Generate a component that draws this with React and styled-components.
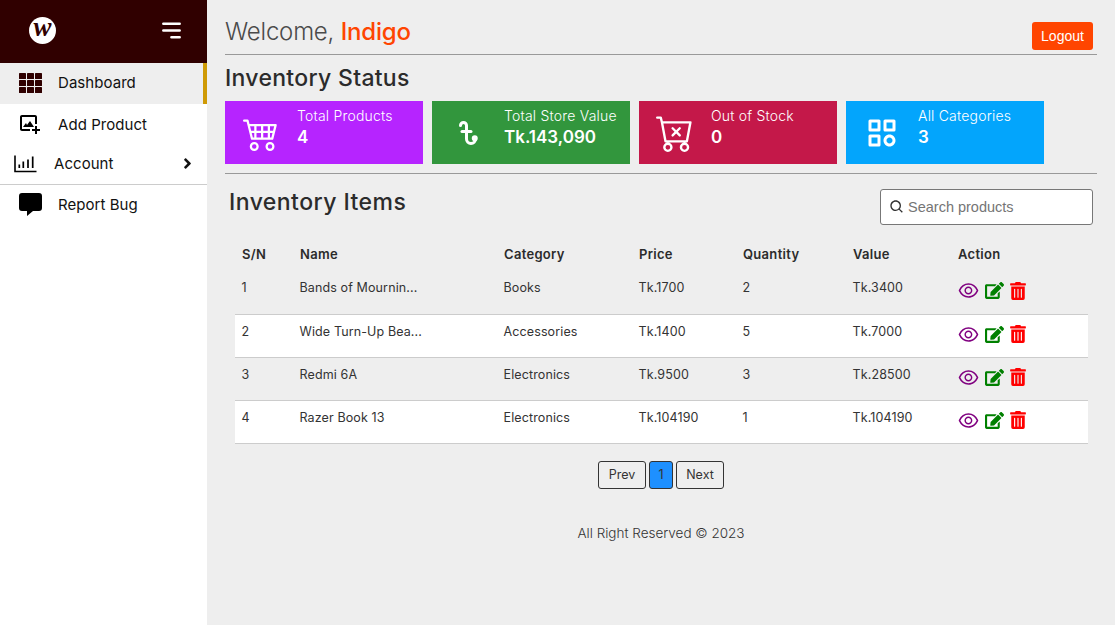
import React from "react";
import styled, { createGlobalStyle } from "styled-components";
import { AiOutlineEye } from "react-icons/ai";
import { BiCategory, BiImageAdd, BiSearch } from "react-icons/bi";
import { BsCart4, BsCartX } from "react-icons/bs";
import { FaEdit, FaTrashAlt, FaAngleRight } from "react-icons/fa";
import { HiMenuAlt3 } from "react-icons/hi";
import { TbCurrencyTaka } from "react-icons/tb";

const FONT = `Inter, "Liberation Sans", sans-serif`;

const GlobalStyle = createGlobalStyle`
  html, body {
    margin: 0;
    padding: 0;
    background: #eeeeee;
    font-family: ${FONT};
  }
  * {
    box-sizing: border-box;
  }
`;

const Layout = styled.div`
  display: flex;
  width: 1115px;
  height: 625px;
  overflow: hidden;
`;

const Sidebar = styled.aside`
  width: 207px;
  flex-shrink: 0;
  background: #ffffff;
`;

const SidebarTop = styled.div`
  height: 63px;
  background: #300000;
  display: flex;
  align-items: center;
  justify-content: space-between;
  padding: 0 25px 0 29px;
  color: #ffffff;
`;

const Logo = styled.div`
  width: 27px;
  height: 27px;
  margin-bottom: 2px;
  border-radius: 50%;
  background: #ffffff;
  color: #300000;
  display: flex;
  align-items: center;
  justify-content: center;
  font: italic 700 27px/27px "Liberation Serif", serif;
  padding-bottom: 6px;
`;

const MenuButton = styled(HiMenuAlt3)`
  font-size: 27px;
  margin-right: -3px;
  margin-bottom: 2px;
`;

const NavItem = styled.div`
  display: flex;
  align-items: center;
  height: ${props => props.height || 40}px;
  padding-left: ${props => props.indent || 18}px;
  padding-bottom: ${props => props.lift || 0}px;
  font-size: 15px;
  letter-spacing: 0.05px;
  color: #111111;
  background: ${props => (props.active ? "#eeeeee" : "transparent")};
  border-right: ${props => (props.active ? "4px solid #cf9a05" : "none")};
  border-bottom: ${props => (props.divided ? "1px solid #cccccc" : "none")};
`;

const NavIcon = styled.span`
  display: flex;
  justify-content: center;
  width: 24px;
  margin-right: ${props => props.gap || 16}px;
  font-size: ${props => props.size || 24}px;
  color: ${props => props.color || "#000000"};
`;

const NavArrow = styled(FaAngleRight)`
  margin-left: auto;
  margin-right: 11px;
  font-size: 17px;
`;

const Main = styled.main`
  flex: 1;
  padding: 0 18px;
`;

const Header = styled.header`
  display: flex;
  align-items: flex-start;
  justify-content: space-between;
  height: 55px;
  border-bottom: 1px solid #999999;
  margin-bottom: 8px;
`;

const Welcome = styled.h3`
  margin: 15px 0 0;
  font-size: 24px;
  line-height: 34px;
  font-weight: 300;
  color: #4a4a4a;
  letter-spacing: -0.2px;
`;

const UserName = styled.span`
  font-weight: 500;
  color: #ff4500;
`;

const LogoutButton = styled.button`
  margin: 22px 4px 0 0;
  width: 61px;
  height: 28px;
  border: none;
  border-radius: 3px;
  background: #ff4500;
  color: #ffffff;
  font: 14px "Liberation Sans", sans-serif;
`;

const SectionTitle = styled.h3`
  margin: 0;
  font-size: 23px;
  line-height: 31px;
  font-weight: 500;
  color: #2b2b2b;
  letter-spacing: 0.3px;
`;

const Cards = styled.section`
  display: flex;
  gap: 9px;
  margin-top: 7px;
  padding-bottom: 9px;
  border-bottom: 1px solid #999999;
`;

const Card = styled.div`
  display: flex;
  width: 198px;
  height: 63px;
  color: #ffffff;
  background: ${props => props.color};
`;

const CardIcon = styled.div`
  display: flex;
  align-items: center;
  justify-content: center;
  width: 72px;
  font-size: ${props => props.size || 38}px;
`;

const CardBody = styled.div`
  padding-top: 6px;
`;

const CardLabel = styled.div`
  font-size: 14px;
  line-height: 17px;
  font-weight: 300;
  letter-spacing: 0.2px;
`;

const CardValue = styled.div`
  margin-top: 1px;
  font-size: 17px;
  line-height: 25px;
  font-weight: 600;
`;

const ItemsBar = styled.div`
  display: flex;
  justify-content: space-between;
  padding: 15px 4px 0;
`;

const ItemsTitle = styled(SectionTitle)`
  line-height: 27px;
  font-weight: 450;
  letter-spacing: 0.45px;
`;

const Search = styled.label`
  display: flex;
  align-items: center;
  gap: 3px;
  width: 213px;
  height: 36px;
  padding-left: 8px;
  background: #ffffff;
  border: 1px solid #777777;
  border-radius: 3px;
  color: #333333;
  font-size: 16px;
`;

const SearchInput = styled.input`
  border: none;
  outline: none;
  width: 170px;
  padding: 0;
  font: 14.5px "Liberation Sans", sans-serif;
  color: #333333;
  &::placeholder {
    color: #757575;
  }
`;

const Table = styled.table`
  width: 853px;
  margin: 11px 0 0 10px;
  border-collapse: collapse;
  table-layout: fixed;
  font-size: 12.5px;
  letter-spacing: 0.12px;
  color: #333333;
`;

const Th = styled.th`
  width: ${props => props.width}px;
  height: 35px;
  padding: 0 0 0 7px;
  text-align: left;
  font-size: 13px;
  font-weight: 600;
  letter-spacing: 0.3px;
  color: #2b2b2b;
`;

const Row = styled.tr`
  height: 43px;
  background: ${props => (props.even ? "#ffffff" : "transparent")};
  border-bottom: 1px solid #cccccc;
`;

const Td = styled.td`
  padding: 0 0 9px 6.5px;
  white-space: nowrap;
`;

const Actions = styled.div`
  display: flex;
  align-items: center;
  gap: 5px;
  padding-top: 6px;
  margin-left: -1px;
`;

const Pagination = styled.nav`
  display: flex;
  justify-content: center;
  gap: 3px;
  margin-top: 17px;
`;

const PageButton = styled.button`
  width: ${props => props.width || 48}px;
  height: 28px;
  padding: 0;
  border: 1px solid #333333;
  border-radius: 3px;
  font: 12.5px ${FONT};
  color: #333333;
  background: ${props => (props.active ? "#1e90ff" : "transparent")};
`;

const Footer = styled.footer`
  margin-top: 35px;
  text-align: center;
  font-size: 13.5px;
  line-height: 18px;
  font-weight: 300;
  color: #333333;
`;

const GridIcon = () => (
  <svg width="23" height="20" viewBox="0 0 23 20" fill="currentColor">
    {[0, 7, 14].map(y =>
      [0, 8, 16].map(x => <rect key={`${x}-${y}`} x={x} y={y} width="7" height="6" rx="0.6" />)
    )}
  </svg>
);

const ChartIcon = () => (
  <svg width="24" height="18" viewBox="0 0 24 18" fill="none" stroke="currentColor">
    <path d="M1 0.5V16.5H22.5" strokeWidth="1.6" />
    <path d="M5.3 13V9.5M9.3 13V6.5M14 13V4.5M18.7 13V1.5" strokeWidth="1.7" />
  </svg>
);

const BubbleIcon = () => (
  <svg width="23" height="23" viewBox="0 0 23 23" fill="currentColor">
    <path d="M3 0H20a3 3 0 0 1 3 3V15a3 3 0 0 1-3 3H14L8 23V18H3a3 3 0 0 1-3-3V3a3 3 0 0 1 3-3z" />
  </svg>
);

const cards = [
  { label: "Total Products", value: "4", color: "#b624ff", icon: <BsCart4 />, size: 36 },
  { label: "Total Store Value", value: "Tk.143,090", color: "#32963d", icon: <TbCurrencyTaka />, size: 36 },
  { label: "Out of Stock", value: "0", color: "#c41849", icon: <BsCartX /> },
  { label: "All Categories", value: "3", color: "#03a5fc", icon: <BiCategory />, size: 36 }
];

const products = [
  { name: "Bands of Mournin...", category: "Books", price: "Tk.1700", quantity: 2, value: "Tk.3400" },
  { name: "Wide Turn-Up Bea...", category: "Accessories", price: "Tk.1400", quantity: 5, value: "Tk.7000" },
  { name: "Redmi 6A", category: "Electronics", price: "Tk.9500", quantity: 3, value: "Tk.28500" },
  { name: "Razer Book 13", category: "Electronics", price: "Tk.104190", quantity: 1, value: "Tk.104190" }
];

const App = () => (
  <Layout>
    <GlobalStyle />
    <Sidebar>
      <SidebarTop>
        <Logo>w</Logo>
        <MenuButton />
      </SidebarTop>
      <NavItem active height={41} lift={2}>
        <NavIcon color="#300000"><GridIcon /></NavIcon>
        Dashboard
      </NavItem>
      <NavItem>
        <NavIcon><BiImageAdd /></NavIcon>
        Add Product
      </NavItem>
      <NavItem indent={14} height={41} lift={1} divided>
        <NavIcon gap={16}><ChartIcon /></NavIcon>
        Account
        <NavArrow />
      </NavItem>
      <NavItem lift={1}>
        <NavIcon><BubbleIcon /></NavIcon>
        Report Bug
      </NavItem>
    </Sidebar>
    <Main>
      <Header>
        <Welcome>Welcome, <UserName>Indigo</UserName></Welcome>
        <LogoutButton>Logout</LogoutButton>
      </Header>
      <SectionTitle>Inventory Status</SectionTitle>
      <Cards>
        {cards.map(card => (
          <Card key={card.label} color={card.color}>
            <CardIcon size={card.size}>{card.icon}</CardIcon>
            <CardBody>
              <CardLabel>{card.label}</CardLabel>
              <CardValue>{card.value}</CardValue>
            </CardBody>
          </Card>
        ))}
      </Cards>
      <ItemsBar>
        <ItemsTitle>Inventory Items</ItemsTitle>
        <Search>
          <BiSearch />
          <SearchInput placeholder="Search products" />
        </Search>
      </ItemsBar>
      <Table>
        <thead>
          <tr>
            <Th width={58}>S/N</Th>
            <Th width={204}>Name</Th>
            <Th width={135}>Category</Th>
            <Th width={104}>Price</Th>
            <Th width={110}>Quantity</Th>
            <Th width={105}>Value</Th>
            <Th width={137}>Action</Th>
          </tr>
        </thead>
        <tbody>
          {products.map((product, index) => (
            <Row key={product.name} even={index % 2 === 1}>
              <Td>{index + 1}</Td>
              <Td>{product.name}</Td>
              <Td>{product.category}</Td>
              <Td>{product.price}</Td>
              <Td>{product.quantity}</Td>
              <Td>{product.value}</Td>
              <Td>
                <Actions>
                  <AiOutlineEye size={23} color="purple" />
                  <FaEdit size={19} color="green" />
                  <FaTrashAlt size={18} color="red" />
                </Actions>
              </Td>
            </Row>
          ))}
        </tbody>
      </Table>
      <Pagination>
        <PageButton>Prev</PageButton>
        <PageButton active width={24}>1</PageButton>
        <PageButton>Next</PageButton>
      </Pagination>
      <Footer>All Right Reserved © 2023</Footer>
    </Main>
  </Layout>
);

export default App;
